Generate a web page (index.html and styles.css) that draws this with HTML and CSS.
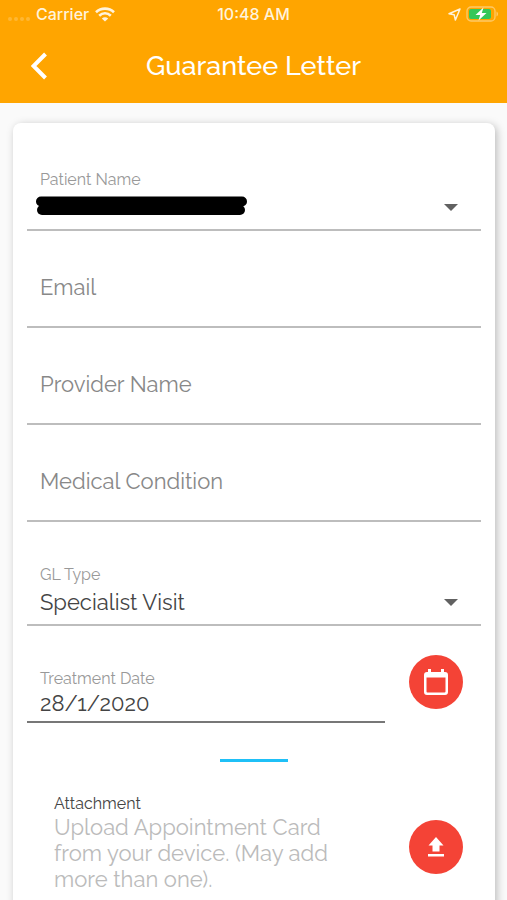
FILE: index.html
```
<!DOCTYPE html>
<html lang="en">
<head>
    <meta charset="utf-8">
    <meta name="viewport" content="width=device-width, initial-scale=1">
    <title>Guarantee Letter</title>
    <link rel="stylesheet" href="styles.css">
</head>
<body>
    <header class="header">
        <div class="status-bar">
            <div class="status-left">
                <span class="signal"><i></i><i></i><i></i><i></i></span>
                <span>Carrier</span>
                <svg class="wifi" width="20" height="15" viewBox="0 0 20 15" fill="none" stroke="currentColor" stroke-width="2.6">
                    <path d="M1 5.2C6 .4 14 .4 19 5.2M4.2 8.7c3.4-3.2 8.2-3.2 11.6 0"/>
                    <path d="M10 14.5 6.8 11.4c1.8-1.7 4.6-1.7 6.4 0z" fill="currentColor" stroke="none"/>
                </svg>
            </div>
            <span class="time">10:48 AM</span>
            <div class="status-right">
                <svg width="13" height="13" viewBox="0 0 13 13" fill="none" stroke="currentColor" stroke-width="1.5" stroke-linejoin="round">
                    <path d="M12 1 1 5.8l5.2 1L7.4 12z"/>
                </svg>
                <svg width="33" height="16" viewBox="0 0 33 16">
                    <rect x="1" y="1" width="28" height="14" rx="4" fill="none" stroke="#ffc966" stroke-width="1.3"/>
                    <rect x="3" y="3" width="22" height="10" rx="2" fill="#35c759"/>
                    <path d="M30.5 5.5c2 .8 2 4.2 0 5z" fill="#ffc966"/>
                    <path d="M17.500 1.500 9.500 9h4.700l-1.700 5.500 8-7.500h-4.700z" fill="#fff"/>
                </svg>
            </div>
        </div>
        <div class="nav">
            <button class="back" type="button" aria-label="Back">
                <svg width="18" height="28" viewBox="0 0 18 28" fill="none" stroke="currentColor" stroke-width="4">
                    <path d="M14.500 2 2.500 14l12 12"/>
                </svg>
            </button>
            <h1>Guarantee Letter</h1>
        </div>
    </header>

    <main class="content">
        <form class="card">
            <div class="field">
                <label for="patient">Patient Name</label>
                <div class="select">
                    <select id="patient"><option></option></select>
                    <svg class="redacted" width="211" height="20" viewBox="0 0 211 20" fill="none" stroke="#000" stroke-linecap="round">
                        <path d="M5 5.500h201" stroke-width="10"/>
                        <path d="M6 14h198" stroke-width="10"/>
                    </svg>
                </div>
            </div>
            <div class="field empty">
                <input type="email" placeholder="Email" aria-label="Email">
            </div>
            <div class="field empty">
                <input type="text" placeholder="Provider Name" aria-label="Provider Name">
            </div>
            <div class="field empty">
                <input type="text" placeholder="Medical Condition" aria-label="Medical Condition">
            </div>
            <div class="field gl-type">
                <label for="gl-type">GL Type</label>
                <div class="select">
                    <select id="gl-type"><option>Specialist Visit</option></select>
                </div>
            </div>
            <div class="row">
                <div class="field date">
                    <label for="date">Treatment Date</label>
                    <input id="date" type="text" value="28/1/2020">
                </div>
                <button class="round" type="button" aria-label="Pick a date">
                    <svg width="24" height="26" viewBox="0 0 24 26">
                        <path d="M4 0h3v3h10V0h3v3h1a3 3 0 0 1 3 3v17a3 3 0 0 1-3 3H3a3 3 0 0 1-3-3V6a3 3 0 0 1 3-3h1zM2.500 8.500v14a1 1 0 0 0 1 1h17a1 1 0 0 0 1-1v-14z" fill="#fff" fill-rule="evenodd"/>
                    </svg>
                </button>
            </div>
            <div class="divider"></div>
            <div class="row attachment">
                <div class="attachment-text">
                    <h2>Attachment</h2>
                    <p>Upload Appointment Card from your device. (May add more than one).</p>
                </div>
                <button class="round" type="button" aria-label="Upload">
                    <svg width="18" height="20" viewBox="0 0 18 20" fill="#fff">
                        <path d="M9 0 1.500 8.500H5.500v6h7v-6h4zM1 17h16v2.500H1z"/>
                    </svg>
                </button>
            </div>
        </form>
    </main>
</body>
</html>
```
FILE: styles.css
```
* {
    box-sizing: border-box;
}
body {
    margin: 0;
    height: 100vh;
    display: flex;
    flex-direction: column;
    font-family: Raleway, Lato, sans-serif;
    background: #fafafa;
    color: #444;
}
button {
    border: none;
    padding: 0;
    cursor: pointer;
}

/* Header */
.header {
    flex: none;
    background: #ffa500;
    color: #fff;
}
.status-bar {
    display: grid;
    grid-template-columns: 1fr auto 1fr;
    align-items: center;
    height: 28px;
    padding: 0 8px;
    font-family: Inter, sans-serif;
    font-size: 16px;
    font-weight: 500;
    color: #fff3dc;
}
.status-left,
.status-right {
    display: flex;
    align-items: center;
    gap: 6px;
}
.status-right {
    justify-content: flex-end;
    gap: 5px;
}
.signal {
    display: flex;
    gap: 2px;
    padding-top: 10px;
}
.signal i {
    width: 4px;
    height: 4px;
    border-radius: 50%;
    background: #ffb733;
}
.nav {
    display: grid;
    grid-template-columns: 48px 1fr 48px;
    align-items: center;
    height: 75px;
    padding: 0 16px;
}
.back {
    display: flex;
    justify-content: center;
    background: none;
    color: #fff;
}
h1 {
    margin: 0;
    font-size: 27px;
    font-weight: 500;
    line-height: 32px;
    text-align: center;
}

/* Form card */
.content {
    flex: 1;
    min-height: 0;
    padding: 20px 12px 0 13px;
    overflow-y: auto;
    scrollbar-width: none;
}
.card {
    padding: 11px 14px 48px;
    background: #fff;
    border-radius: 8px;
    box-shadow: 2px 2px 8px rgba(0, 0, 0, 0.25);
}
.field {
    display: flex;
    flex-direction: column;
    justify-content: flex-end;
    gap: 3px;
    height: 97px;
    padding: 0 13px 8px;
    border-bottom: 2px solid #bdbdbd;
}
.field label {
    font-size: 16px;
    line-height: 20px;
    color: #999;
}
.field input,
.field select {
    display: block;
    width: 100%;
    height: 28px;
    padding: 0;
    border: none;
    outline: none;
    appearance: none;
    background: none;
    font-family: inherit;
    font-size: 22px;
    line-height: 28px;
    color: #444;
}
.field input::placeholder {
    color: #888;
    opacity: 1;
}
.field.empty {
    padding-bottom: 25px;
}
.field.gl-type {
    height: 104px;
}
.field.date {
    flex: 1;
    gap: 0;
    padding-bottom: 4px;
    border-color: #777;
}
.select {
    position: relative;
}
.select::after {
    content: "";
    position: absolute;
    top: 11px;
    right: 10px;
    border: 7px solid transparent;
    border-top-color: #616161;
    border-bottom: none;
}
.redacted {
    position: absolute;
    top: 3px;
    left: -4px;
}
.row {
    display: flex;
    align-items: flex-end;
    gap: 24px;
    padding-right: 18px;
}
.round {
    display: flex;
    flex: none;
    align-items: center;
    justify-content: center;
    width: 54px;
    height: 54px;
    margin-bottom: 14px;
    border-radius: 50%;
    background: #f44336;
}
.divider {
    width: 68px;
    height: 3px;
    margin: 36px auto 32px;
    background: #1fc0f7;
}
.attachment {
    padding-left: 27px;
}
.attachment .round {
    margin-bottom: 18px;
}
.attachment-text {
    flex: 1;
    padding-right: 40px;
}
h2 {
    margin: 0;
    font-size: 16px;
    font-weight: 400;
    line-height: 20px;
}
.attachment p {
    margin: 0;
    font-size: 22px;
    line-height: 26px;
    color: #bbb;
}
```
